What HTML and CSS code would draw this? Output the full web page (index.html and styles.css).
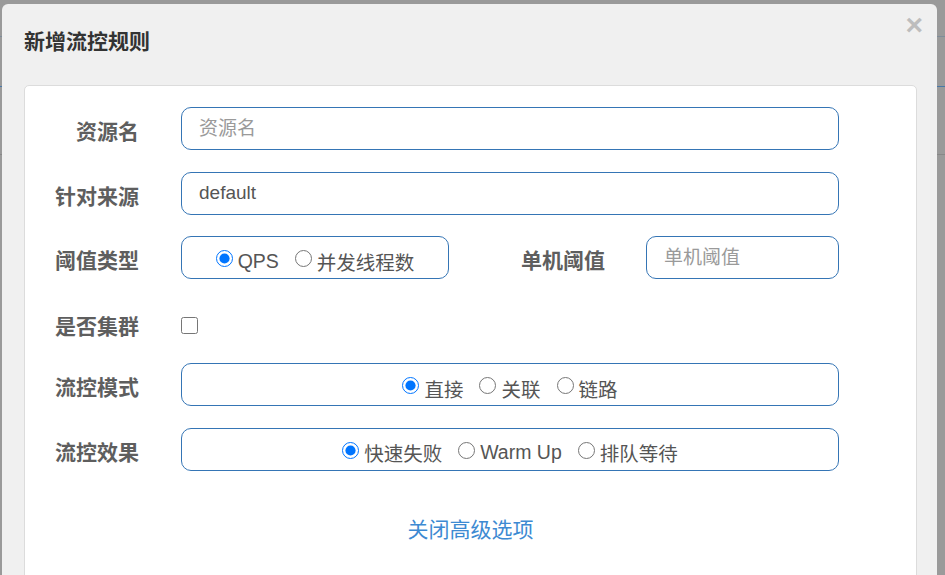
FILE: index.html
```html
<!DOCTYPE html>
<html lang="zh-CN">
<head>
    <meta charset="UTF-8">
    <title>新增流控规则</title>
    <link rel="stylesheet" href="styles.css">
</head>
<body>
    <div class="backdrop">
        <div class="modal">
            <div class="modal-header">
                <div class="modal-title">新增流控规则</div>
                <span class="close">&times;</span>
            </div>

            <div class="panel">
                <div class="form-row">
                    <label class="control-label">资源名</label>
                    <input class="form-control" type="text" placeholder="资源名">
                </div>

                <div class="form-row">
                    <label class="control-label">针对来源</label>
                    <input class="form-control" type="text" value="default">
                </div>

                <div class="form-row">
                    <label class="control-label">阈值类型</label>
                    <div class="radio-box radio-box-small">
                        <label class="radio-item"><input type="radio" name="grade" checked>QPS</label>
                        <label class="radio-item"><input type="radio" name="grade">并发线程数</label>
                    </div>
                    <label class="control-label control-label-wide">单机阈值</label>
                    <input class="form-control" type="text" placeholder="单机阈值">
                </div>

                <div class="form-row form-row-check">
                    <label class="control-label">是否集群</label>
                    <input class="checkbox" type="checkbox">
                </div>

                <div class="form-row">
                    <label class="control-label">流控模式</label>
                    <div class="radio-box">
                        <label class="radio-item"><input type="radio" name="strategy" checked>直接</label>
                        <label class="radio-item"><input type="radio" name="strategy">关联</label>
                        <label class="radio-item"><input type="radio" name="strategy">链路</label>
                    </div>
                </div>

                <div class="form-row">
                    <label class="control-label">流控效果</label>
                    <div class="radio-box">
                        <label class="radio-item"><input type="radio" name="behavior" checked>快速失败</label>
                        <label class="radio-item"><input type="radio" name="behavior">Warm Up</label>
                        <label class="radio-item"><input type="radio" name="behavior">排队等待</label>
                    </div>
                </div>

                <div class="advanced">
                    <a class="advanced-link" href="#">关闭高级选项</a>
                </div>
            </div>
        </div>
    </div>
</body>
</html>
```

FILE: styles.css
```css
* {
    margin: 0;
    padding: 0;
    box-sizing: border-box;
}

html, body {
    height: 100%;
    overflow: hidden;
}

body {
    font-family: 'Liberation Sans', 'Noto Sans CJK SC', sans-serif;
    background-color: #9a9a9a;
}

.backdrop {
    height: 100%;
    padding: 4px 8px 0 2px;
    background: linear-gradient(#9a9a9a 36px, #7f8c99 36px, #7f8c99 37px, #9a9a9a 37px, #9a9a9a 86px, #4a78a8 86px, #4a78a8 87px, #9a9a9a 87px, #9a9a9a 154px, #888 154px, #888 155px, #9a9a9a 155px);
}

.modal {
    background-color: #f0f0f0;
    border-radius: 6px 6px 0 0;
    height: 100%;
    padding: 0 20px 0 22px;
}

.modal-header {
    display: flex;
    justify-content: space-between;
    align-items: flex-start;
    height: 81px;
}

.modal-title {
    font-size: 21px;
    font-weight: bold;
    color: #333;
    margin-top: 21px;
}

.close {
    font-size: 30px;
    font-weight: bold;
    color: #bdbdbd;
    line-height: 1;
    margin-top: 6px;
    margin-right: -6px;
}

.panel {
    background: white;
    border: 1px solid #dcdcdc;
    border-radius: 5px;
    height: 520px;
    padding: 21px 77px 0 0;
}

.form-row {
    display: flex;
    align-items: center;
    height: 43px;
    margin-bottom: 21.5px;
}

.form-row-check {
    height: 41px;
    padding-top: 8px;
}

.control-label {
    width: 114px;
    flex-shrink: 0;
    margin-right: 42px;
    padding-top: 3px;
    text-align: right;
    font-size: 21px;
    font-weight: bold;
    color: #5e5e5e;
}

.form-row-check .control-label {
    padding-top: 0;
}

.control-label-wide {
    width: 156px;
    margin-right: 41px;
}

.form-control {
    flex: 1;
    min-width: 0;
    height: 43px;
    border: 1px solid #3575b5;
    border-radius: 10px;
    padding: 0 17px;
    font-family: inherit;
    font-size: 19px;
    color: #555;
    outline: none;
}

.form-control::placeholder {
    color: #9a9a9a;
}

.radio-box {
    flex: 1;
    height: 43px;
    border: 1px solid #3575b5;
    border-radius: 10px;
    display: flex;
    justify-content: center;
    align-items: center;
    gap: 16px;
    padding-top: 7px;
}

.radio-box-small {
    flex: 0 0 268px;
}

.radio-item {
    display: flex;
    align-items: center;
    font-size: 19.5px;
    color: #555;
}

.radio-item input {
    width: 17px;
    height: 17px;
    margin: -5px 5px 0 0;
    accent-color: #0075ff;
}

.checkbox {
    width: 17px;
    height: 17px;
    margin: 0;
}

.advanced {
    text-align: center;
    padding-top: 21px;
    margin-right: -77px;
}

.advanced-link {
    font-size: 21px;
    color: #3d8ad2;
    text-decoration: none;
}
```
